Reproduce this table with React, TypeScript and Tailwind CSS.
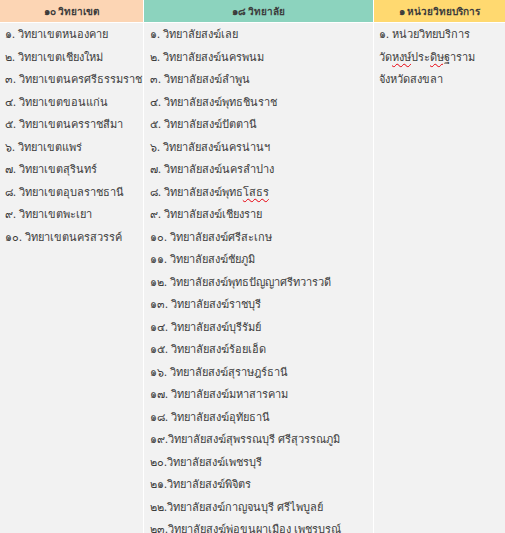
const regions = [
  "๑. วิทยาเขตหนองคาย",
  "๒. วิทยาเขตเชียงใหม่",
  "๓. วิทยาเขตนครศรีธรรมราช",
  "๔. วิทยาเขตขอนแก่น",
  "๕. วิทยาเขตนครราชสีมา",
  "๖. วิทยาเขตแพร่",
  "๗. วิทยาเขตสุรินทร์",
  "๘. วิทยาเขตอุบลราชธานี",
  "๙. วิทยาเขตพะเยา",
  "๑๐. วิทยาเขตนครสวรรค์",
];

const colleges = [
  "๑. วิทยาลัยสงฆ์เลย",
  "๒. วิทยาลัยสงฆ์นครพนม",
  "๓. วิทยาลัยสงฆ์ลำพูน",
  "๔. วิทยาลัยสงฆ์พุทธชินราช",
  "๕. วิทยาลัยสงฆ์ปัตตานี",
  "๖. วิทยาลัยสงฆ์นครน่านฯ",
  "๗. วิทยาลัยสงฆ์นครลำปาง",
  "๘. วิทยาลัยสงฆ์พุทธโสธร",
  "๙. วิทยาลัยสงฆ์เชียงราย",
  "๑๐. วิทยาลัยสงฆ์ศรีสะเกษ",
  "๑๑. วิทยาลัยสงฆ์ชัยภูมิ",
  "๑๒. วิทยาลัยสงฆ์พุทธปัญญาศรีทวารวดี",
  "๑๓. วิทยาลัยสงฆ์ราชบุรี",
  "๑๔. วิทยาลัยสงฆ์บุรีรัมย์",
  "๑๕. วิทยาลัยสงฆ์ร้อยเอ็ด",
  "๑๖. วิทยาลัยสงฆ์สุราษฎร์ธานี",
  "๑๗. วิทยาลัยสงฆ์มหาสารคาม",
  "๑๘. วิทยาลัยสงฆ์อุทัยธานี",
  "๑๙.วิทยาลัยสงฆ์สุพรรณบุรี ศรีสุวรรณภูมิ",
  "๒๐.วิทยาลัยสงฆ์เพชรบุรี",
  "๒๑.วิทยาลัยสงฆ์พิจิตร",
  "๒๒.วิทยาลัยสงฆ์กาญจนบุรี ศรีไพบูลย์",
  "๒๓.วิทยาลัยสงฆ์พ่อขุนผาเมือง เพชรบรณ์",
];

const Squiggle = ({ children }: { children: React.ReactNode }) => (
  <span className="underline decoration-wavy decoration-red-600 decoration-1 underline-offset-2">{children}</span>
);

const App = () => {
  return (
    <div className="w-[505px] h-[533px] overflow-hidden bg-white text-[11px] text-[#3c3c3c] font-['Tahoma','Noto_Sans',sans-serif]">
      <div className="grid grid-cols-[143px_229px_1fr] gap-px bg-white">
        {/* Header */}
        <div className="h-[22px] bg-[#fcd5b4] flex items-center justify-center font-bold text-[10px]">๑๐ วิทยาเขต</div>
        <div className="h-[22px] bg-[#8cd3be] flex items-center justify-center font-bold text-[10px]">๑๘ วิทยาลัย</div>
        <div className="h-[22px] bg-[#ffd970] flex items-center justify-center font-bold text-[10px]">๑ หน่วยวิทยบริการ</div>

        {/* Body */}
        <div className="bg-[#f2f2f2] h-[520px] pl-[5px] leading-[22.5px]">
          {regions.map((r) => (
            <div key={r} className="whitespace-nowrap">{r}</div>
          ))}
        </div>
        <div className="bg-[#f2f2f2] h-[520px] pl-[6px] leading-[22.5px]">
          {colleges.map((c) =>
            c === "๘. วิทยาลัยสงฆ์พุทธโสธร" ? (
              <div key={c} className="whitespace-nowrap">
                ๘. วิทยาลัยสงฆ์พุทธ<Squiggle>โสธร</Squiggle>
              </div>
            ) : (
              <div key={c} className="whitespace-nowrap">{c}</div>
            )
          )}
        </div>
        <div className="bg-[#f2f2f2] h-[520px] pl-[5px] leading-[22.5px]">
          <div>๑. หน่วยวิทยบริการ</div>
          <div>
            วัด<Squiggle>หงษ์</Squiggle>ประ<Squiggle>ดิษฐ</Squiggle>าราม
          </div>
          <div>จังหวัดสงขลา</div>
        </div>
      </div>
    </div>
  );
};

export default App;
